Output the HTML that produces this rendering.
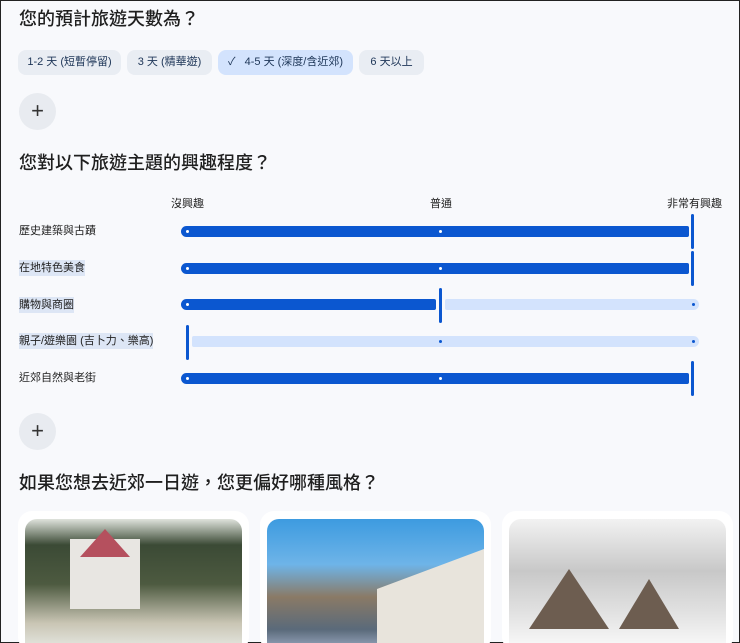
<!DOCTYPE html>
<html><head><meta charset="utf-8"><style>
*{margin:0;padding:0;box-sizing:border-box}
html,body{width:740px;height:643px;overflow:hidden}
body{background:#f8f9fc;font-family:"Liberation Sans","Noto Sans CJK TC",sans-serif;color:#1f1f1f;position:relative;border:1px solid #222;}
.abs{position:absolute}
h2{position:absolute;left:18px;font-size:18px;font-weight:500;line-height:24px;white-space:nowrap}
.chip{position:absolute;top:49px;height:25px;border-radius:8px;background:#e9edf3;font-size:11px;color:#1d3557;line-height:25px;text-align:center;white-space:nowrap}
.plus{position:absolute;left:18px;width:37px;height:37px;border-radius:50%;background:#e8ebf0;color:#333;font-size:22px;line-height:35px;text-align:center;font-weight:300}
.lbl{position:absolute;left:18px;font-size:11px;line-height:16px;color:#222;white-space:nowrap}
.dark{position:absolute;height:11px;background:#0b57d0;border-radius:6px 2px 2px 6px}
.light{position:absolute;height:11px;background:#d3e3fd;border-radius:2px 6px 6px 2px}
.th{position:absolute;width:3px;height:35px;background:#0b57d0;border-radius:2px}
.dot{position:absolute;width:3px;height:3px;border-radius:50%}
.sc{position:absolute;top:194px;font-size:11px;color:#222;white-space:nowrap}
.card{position:absolute;top:510px;width:231px;height:140px;background:#fff;border-radius:14px}
.img{position:absolute;top:518px;width:217px;height:130px;border-radius:12px 12px 0 0;overflow:hidden}
</style></head><body>
<h2 style="top:6px">您的預計旅遊天數為？</h2>
<div class="chip" style="left:17px;width:103px">1-2 天 (短暫停留)</div>
<div class="chip" style="left:126px;width:85px">3 天 (精華遊)</div>
<div class="chip" style="left:217px;width:135px;background:#d3e3fd">✓&nbsp;&nbsp; 4-5 天 (深度/含近郊)</div>
<div class="chip" style="left:358px;width:65px">6 天以上</div>
<div class="plus" style="top:92px">+</div>

<h2 style="top:150px">您對以下旅遊主題的興趣程度？</h2>
<div class="sc" style="left:170px">沒興趣</div>
<div class="sc" style="left:429px">普通</div>
<div class="sc" style="left:666px">非常有興趣</div>

<div class="lbl" style="top:222px">歷史建築與古蹟</div>
<div class="dark" style="left:180px;top:225px;width:508px"></div>
<div class="th" style="left:690px;top:213px"></div>

<div class="lbl" style="top:259px;background:#dde6f5">在地特色美食</div>
<div class="dark" style="left:180px;top:262px;width:508px"></div>
<div class="th" style="left:690px;top:250px"></div>

<div class="lbl" style="top:296px;background:#dde6f5">購物與商圈</div>
<div class="dark" style="left:180px;top:298px;width:255px"></div>
<div class="th" style="left:438px;top:287px"></div>
<div class="light" style="left:444px;top:298px;width:254px"></div>

<div class="lbl" style="top:332px;background:#dde6f5">親子/遊樂園 (吉卜力、樂高)</div>
<div class="th" style="left:185px;top:324px"></div>
<div class="light" style="left:191px;top:335px;width:507px"></div>

<div class="lbl" style="top:369px">近郊自然與老街</div>
<div class="dark" style="left:180px;top:372px;width:508px"></div>
<div class="th" style="left:690px;top:360px"></div>

<div class="dot" style="left:185px;top:229px;background:#fff"></div><div class="dot" style="left:438px;top:229px;background:#fff"></div>
<div class="dot" style="left:185px;top:266px;background:#fff"></div><div class="dot" style="left:438px;top:266px;background:#fff"></div>
<div class="dot" style="left:185px;top:302px;background:#fff"></div><div class="dot" style="left:691px;top:302px;background:#0b57d0"></div>
<div class="dot" style="left:438px;top:339px;background:#0b57d0"></div><div class="dot" style="left:691px;top:339px;background:#0b57d0"></div>
<div class="dot" style="left:185px;top:376px;background:#fff"></div><div class="dot" style="left:438px;top:376px;background:#fff"></div>

<div class="plus" style="top:412px">+</div>
<h2 style="top:470px">如果您想去近郊一日遊，您更偏好哪種風格？</h2>

<div class="card" style="left:17px"></div>
<div class="card" style="left:259px"></div>
<div class="card" style="left:501px"></div>
<div class="img" style="left:24px;background:linear-gradient(180deg,#dfe3dc 0%,#3b4a35 20%,#4d5a40 50%,#c9c5b4 80%,#e6e8e2 100%)">
 <div class="abs" style="left:45px;top:20px;width:70px;height:70px;background:#e8e6e2"></div>
 <div class="abs" style="left:55px;top:10px;width:50px;height:28px;background:#b5505e;clip-path:polygon(50% 0,100% 100%,0 100%)"></div>
</div>
<div class="img" style="left:266px;background:linear-gradient(180deg,#3d9be0 0%,#6eb4e8 35%,#8a7a66 60%,#5a6a7a 85%,#9aa8c0 100%)">
 <div class="abs" style="left:110px;top:30px;width:107px;height:100px;background:#e8e4dc;clip-path:polygon(0 40%,100% 0,100% 100%,0 100%)"></div>
</div>
<div class="img" style="left:508px;background:linear-gradient(180deg,#f2f2f2,#c8c8c8 40%,#e0e0e0 70%,#fafafa)">
 <div class="abs" style="left:20px;top:50px;width:80px;height:60px;background:#6d5d50;clip-path:polygon(50% 0,100% 100%,0 100%)"></div>
 <div class="abs" style="left:110px;top:60px;width:60px;height:50px;background:#6d5d50;clip-path:polygon(50% 0,100% 100%,0 100%)"></div>
</div>
</body></html>
